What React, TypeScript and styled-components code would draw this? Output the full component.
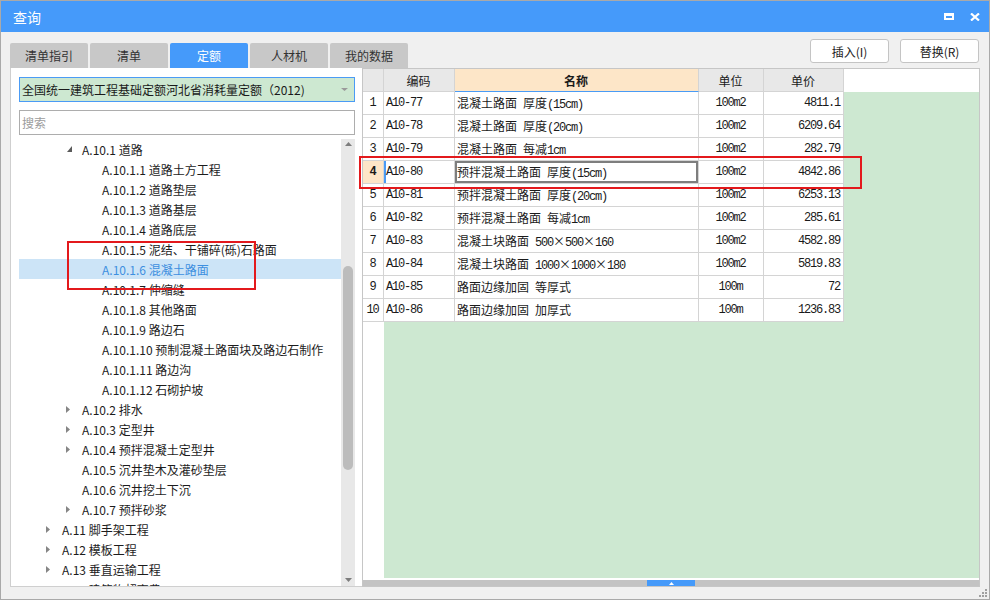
import React, { FC } from 'react';
import styled, { createGlobalStyle } from 'styled-components';

const GlobalStyle = createGlobalStyle`
  html, body {
    margin: 0;
    padding: 0;
    background: #ffffff;
  }
  body {
    font-family: "Noto Sans CJK SC", "Noto Sans", sans-serif;
    font-size: 12px;
    color: #222;
  }
  * {
    box-sizing: border-box;
  }
`;

const BLUE = '#459afa';
const GREEN = '#cde8d1';
const PEACH = '#fde6c8';
const GRID = '#d4d4d4';

const WindowStyle = styled.div`
  position: relative;
  width: 990px;
  height: 600px;
  border: 1px solid #a9a9a9;
  background: #f0f0f0;
  display: flex;
  flex-direction: column;
  overflow: hidden;
`;

const TitleBarStyle = styled.div`
  flex: none;
  height: 31px;
  background: ${BLUE};
  display: flex;
  align-items: center;
  justify-content: space-between;
  padding: 0 9px 0 12px;
  color: #fff;
  font-size: 14px;
`;

const WinButtonsStyle = styled.div`
  display: flex;
  align-items: center;
  gap: 16px;
  & > svg {
    display: block;
  }
`;

const BodyStyle = styled.div`
  flex: 1;
  min-height: 0;
  display: flex;
  flex-direction: column;
  padding: 0 9px 12px 9px;
`;

const TopRowStyle = styled.div`
  flex: none;
  height: 36px;
  display: flex;
  justify-content: space-between;
`;

const TabsStyle = styled.div`
  display: flex;
  gap: 2px;
  align-self: flex-end;
`;

const TabStyle = styled.div<{ $active?: boolean }>`
  width: 78px;
  height: 25px;
  display: flex;
  align-items: center;
  justify-content: center;
  border-radius: 2px 2px 0 0;
  background: ${p => (p.$active ? BLUE : '#c8c8c8')};
  color: ${p => (p.$active ? '#fff' : '#333')};
  font-size: 12px;
`;

const ActionsStyle = styled.div`
  display: flex;
  gap: 11px;
  margin-top: 7px;
  margin-right: 1px;
  align-self: flex-start;
`;

const ActionButtonStyle = styled.div`
  width: 79px;
  height: 24px;
  display: flex;
  align-items: center;
  justify-content: center;
  background: #fff;
  border: 1px solid #c4c4c4;
  border-radius: 3px;
  color: #222;
  font-size: 12px;
`;

const ContentStyle = styled.div`
  flex: 1;
  min-height: 0;
  display: flex;
`;

const LeftPanelStyle = styled.div`
  flex: none;
  width: 352px;
  background: #fff;
  border: 1px solid #cfcfcf;
  border-top: none;
  border-right: none;
  padding: 9px 7px 0 8px;
  display: flex;
  flex-direction: column;
`;

const SelectStyle = styled.div`
  flex: none;
  height: 25px;
  border: 1px solid #4a9bf5;
  background: ${GREEN};
  display: flex;
  align-items: center;
  justify-content: space-between;
  padding: 0 6px 0 2px;
  font-size: 12px;
  color: #1a1a1a;
  white-space: nowrap;
`;

const SearchStyle = styled.input`
  flex: none;
  height: 25px;
  margin-top: 8px;
  border: 1px solid #adadad;
  padding: 0 2px;
  outline: none;
  font-family: "Noto Sans CJK SC", sans-serif;
  font-size: 12px;
  &::placeholder {
    color: #9c9c9c;
  }
`;

const TreeAreaStyle = styled.div`
  flex: 1;
  min-height: 0;
  margin-top: 4px;
  display: flex;
`;

const TreeListStyle = styled.div`
  flex: 1;
  overflow: hidden;
`;

const TreeRowStyle = styled.div<{ $level: number; $selected?: boolean }>`
  height: 20px;
  display: flex;
  align-items: center;
  padding-left: ${p => 3 + p.$level * 20}px;
  white-space: nowrap;
  font-size: 12px;
  background: ${p => (p.$selected ? '#cce4f7' : 'transparent')};
  color: ${p => (p.$selected ? '#3d8fe0' : '#1c1c1c')};
`;

const ExpanderStyle = styled.span<{ $open?: boolean }>`
  flex: none;
  width: 20px;
  height: 20px;
  display: flex;
  align-items: center;
  padding-left: ${p => (p.$open ? 5 : 4)}px;
`;

const VScrollStyle = styled.div`
  flex: none;
  width: 14px;
  background: #e8e8e8;
  display: flex;
  flex-direction: column;
  align-items: center;
`;

const ScrollArrowStyle = styled.div<{ $h: number }>`
  flex: none;
  height: ${p => p.$h}px;
  display: flex;
  align-items: center;
  justify-content: center;
`;

const VThumbStyle = styled.div`
  flex: none;
  width: 10px;
  height: 204px;
  margin-top: 118px;
  border-radius: 5px;
  background: #bcbcbc;
`;

const SpacerStyle = styled.div`
  flex: 1;
`;

const RightPanelStyle = styled.div`
  flex: 1;
  min-width: 0;
  background: #fff;
  border: 1px solid #c6c6c6;
  display: flex;
  flex-direction: column;
`;

const GridStyle = styled.div`
  flex: none;
  display: grid;
  grid-template-columns: 21px 71px 244px 65px 80px 1fr;
  grid-auto-rows: 23px;
`;

type Mark = 'edit' | 'cursor' | undefined;

const CellStyle = styled.div<{
  $align?: 'left' | 'center' | 'right';
  $bg?: string;
  $bold?: boolean;
  $mono?: boolean;
  $plain?: boolean;
  $accent?: boolean;
  $mark?: Mark;
}>`
  display: flex;
  align-items: center;
  justify-content: ${p =>
    p.$align === 'right' ? 'flex-end' : p.$align === 'center' ? 'center' : 'flex-start'};
  padding: 0 3px 0 2px;
  border-right: ${p => (p.$plain ? 'none' : `1px solid ${GRID}`)};
  border-bottom: ${p => (p.$plain ? 'none' : `1px solid ${p.$accent ? '#4a9bf5' : GRID}`)};
  background: ${p => p.$bg ?? '#fff'};
  font-weight: ${p => (p.$bold ? 700 : 400)};
  font-family: ${p =>
    p.$mono ? '"Liberation Mono", "Noto Sans CJK SC", monospace' : '"Noto Sans CJK SC", sans-serif'};
  letter-spacing: ${p => (p.$mono ? '-1.2px' : '0')};
  font-size: 12px;
  color: #1a1a1a;
  white-space: nowrap;
  overflow: hidden;
  box-shadow: ${p =>
    p.$mark === 'edit'
      ? 'inset 0 0 0 2px #7e7e7e'
      : p.$mark === 'cursor'
      ? 'inset 2px 0 0 #4a9bf5'
      : 'none'};
`;

const LatinRunStyle = styled.span`
  font-family: "Liberation Mono", monospace;
  letter-spacing: -1.2px;
  white-space: pre;
`;

const FillerStyle = styled.div`
  flex: 1;
  display: flex;
`;

const FillerGutterStyle = styled.div`
  flex: none;
  width: 21px;
  background: #fff;
`;

const FillerGreenStyle = styled.div`
  flex: 1;
  background: ${GREEN};
`;

const HScrollStyle = styled.div`
  flex: none;
  height: 6px;
  margin-top: 2px;
  background: #c3c3c3;
  display: flex;
  justify-content: center;
`;

const HThumbStyle = styled.div`
  width: 48px;
  height: 6px;
  background: ${BLUE};
  display: flex;
  align-items: center;
  justify-content: center;
`;

const AnnotationStyle = styled.div<{ $x: number; $y: number; $w: number; $h: number }>`
  position: absolute;
  left: ${p => p.$x - 1}px;
  top: ${p => p.$y - 1}px;
  width: ${p => p.$w}px;
  height: ${p => p.$h}px;
  border: 2px solid #e3191c;
  pointer-events: none;
`;

const GripStyle = styled.div`
  position: absolute;
  right: 1px;
  bottom: 1px;
  & > svg {
    display: block;
  }
`;

// ---------- data ----------

const tabs = ['清单指引', '清单', '定额', '人材机', '我的数据'];

interface TreeItem {
  level: number;
  label: string;
  expand?: 'open' | 'closed';
  selected?: boolean;
}

const tree: TreeItem[] = [
  { level: 2, label: 'A.10.1 道路', expand: 'open' },
  { level: 3, label: 'A.10.1.1 道路土方工程' },
  { level: 3, label: 'A.10.1.2 道路垫层' },
  { level: 3, label: 'A.10.1.3 道路基层' },
  { level: 3, label: 'A.10.1.4 道路底层' },
  { level: 3, label: 'A.10.1.5 泥结、干铺碎(砾)石路面' },
  { level: 3, label: 'A.10.1.6 混凝土路面', selected: true },
  { level: 3, label: 'A.10.1.7 伸缩缝' },
  { level: 3, label: 'A.10.1.8 其他路面' },
  { level: 3, label: 'A.10.1.9 路边石' },
  { level: 3, label: 'A.10.1.10 预制混凝土路面块及路边石制作' },
  { level: 3, label: 'A.10.1.11 路边沟' },
  { level: 3, label: 'A.10.1.12 石砌护坡' },
  { level: 2, label: 'A.10.2 排水', expand: 'closed' },
  { level: 2, label: 'A.10.3 定型井', expand: 'closed' },
  { level: 2, label: 'A.10.4 预拌混凝土定型井', expand: 'closed' },
  { level: 2, label: 'A.10.5 沉井垫木及灌砂垫层' },
  { level: 2, label: 'A.10.6 沉井挖土下沉' },
  { level: 2, label: 'A.10.7 预拌砂浆', expand: 'closed' },
  { level: 1, label: 'A.11 脚手架工程', expand: 'closed' },
  { level: 1, label: 'A.12 模板工程', expand: 'closed' },
  { level: 1, label: 'A.13 垂直运输工程', expand: 'closed' },
  { level: 1, label: 'A.14 建筑物超高费', expand: 'closed' },
];

const rows = [
  ['A10-77', '混凝土路面 厚度(15cm)', '100m2', '4811.1'],
  ['A10-78', '混凝土路面 厚度(20cm)', '100m2', '6209.64'],
  ['A10-79', '混凝土路面 每减1cm', '100m2', '282.79'],
  ['A10-80', '预拌混凝土路面 厚度(15cm)', '100m2', '4842.86'],
  ['A10-81', '预拌混凝土路面 厚度(20cm)', '100m2', '6253.13'],
  ['A10-82', '预拌混凝土路面 每减1cm', '100m2', '285.61'],
  ['A10-83', '混凝土块路面 500×500×160', '100m2', '4582.89'],
  ['A10-84', '混凝土块路面 1000×1000×180', '100m2', '5819.83'],
  ['A10-85', '路面边缘加固 等厚式', '100m', '72'],
  ['A10-86', '路面边缘加固 加厚式', '100m', '1236.83'],
];

const activeRow = 3;

// ---------- parts ----------

// CJK runs in the sans face, ascii runs in a narrow mono face (like SimSun half-width)
const MixedText: FC<{ text: string }> = ({ text }) => (
  <span>
    {text
      .split(/([\x20-\x7e]+)/)
      .filter(Boolean)
      .map((part, i) =>
        /^[\x20-\x7e]+$/.test(part) ? (
          <LatinRunStyle key={i}>{part}</LatinRunStyle>
        ) : (
          <span key={i}>{part}</span>
        )
      )}
  </span>
);

const Expander: FC<{ state?: 'open' | 'closed' }> = ({ state }) => (
  <ExpanderStyle $open={state === 'open'}>
    {state === 'open' && (
      <svg width="5" height="6" viewBox="0 0 5 6">
        <path d="M5 0V6H0Z" fill="#5a5a5a" />
      </svg>
    )}
    {state === 'closed' && (
      <svg width="4" height="7" viewBox="0 0 4 7">
        <path d="M0 0L4 3.5L0 7Z" fill="#858585" />
      </svg>
    )}
  </ExpanderStyle>
);

const ArrowUp: FC<{ color: string; w?: number; h?: number }> = ({ color, w = 7, h = 4 }) => (
  <svg width={w} height={h} viewBox={`0 0 ${w} ${h}`}>
    <path d={`M0 ${h}L${w / 2} 0L${w} ${h}Z`} fill={color} />
  </svg>
);

const ArrowDown: FC<{ color: string; w?: number; h?: number }> = ({ color, w = 7, h = 4 }) => (
  <svg width={w} height={h} viewBox={`0 0 ${w} ${h}`}>
    <path d={`M0 0L${w / 2} ${h}L${w} 0Z`} fill={color} />
  </svg>
);

const App: FC = () => {
  return (
    <WindowStyle>
      <GlobalStyle />
      <TitleBarStyle>
        <span>查询</span>
        <WinButtonsStyle>
          <svg width="10" height="7" viewBox="0 0 10 7">
            <path d="M0 0H10V7H0Z M2 3V5H8V3Z" fill="#fff" fillRule="evenodd" />
          </svg>
          <svg width="10" height="8" viewBox="0 0 10 8">
            <path d="M1 0.5L9 7.5M9 0.5L1 7.5" stroke="#fff" strokeWidth="2.2" />
          </svg>
        </WinButtonsStyle>
      </TitleBarStyle>

      <BodyStyle>
        <TopRowStyle>
          <TabsStyle>
            {tabs.map(t => (
              <TabStyle key={t} $active={t === '定额'}>
                {t}
              </TabStyle>
            ))}
          </TabsStyle>
          <ActionsStyle>
            <ActionButtonStyle>插入(I)</ActionButtonStyle>
            <ActionButtonStyle>替换(R)</ActionButtonStyle>
          </ActionsStyle>
        </TopRowStyle>

        <ContentStyle>
          <LeftPanelStyle>
            <SelectStyle>
              <span>全国统一建筑工程基础定额河北省消耗量定额（2012)</span>
              <ArrowDown color="#9a9a9a" w={7} h={3} />
            </SelectStyle>
            <SearchStyle placeholder="搜索" />
            <TreeAreaStyle>
              <TreeListStyle>
                {tree.map(item => (
                  <TreeRowStyle key={item.label} $level={item.level} $selected={item.selected}>
                    <Expander state={item.expand} />
                    {item.label}
                  </TreeRowStyle>
                ))}
              </TreeListStyle>
              <VScrollStyle>
                <ScrollArrowStyle $h={9}>
                  <ArrowUp color="#7d7d7d" />
                </ScrollArrowStyle>
                <VThumbStyle />
                <SpacerStyle />
                <ScrollArrowStyle $h={12}>
                  <ArrowDown color="#7d7d7d" />
                </ScrollArrowStyle>
              </VScrollStyle>
            </TreeAreaStyle>
          </LeftPanelStyle>

          <RightPanelStyle>
            <GridStyle>
              <CellStyle $bg="#e8e8e8" />
              <CellStyle $bg="#e8e8e8" $align="center">编码</CellStyle>
              <CellStyle $bg={PEACH} $align="center" $bold $accent>名称</CellStyle>
              <CellStyle $bg="#e8e8e8" $align="center">单位</CellStyle>
              <CellStyle $bg="#e8e8e8" $align="center">单价</CellStyle>
              <CellStyle $plain />
              {rows.map((r, i) => {
                const active = i === activeRow;
                return (
                  <React.Fragment key={r[0]}>
                    <CellStyle $align="center" $mono $bg={active ? PEACH : '#fff'} $bold={active}>
                      {i + 1}
                    </CellStyle>
                    <CellStyle $mono $mark={active ? 'cursor' : undefined}>{r[0]}</CellStyle>
                    <CellStyle $mark={active ? 'edit' : undefined}>
                      <MixedText text={r[1]} />
                    </CellStyle>
                    <CellStyle $align="center" $mono>{r[2]}</CellStyle>
                    <CellStyle $align="right" $mono>{r[3]}</CellStyle>
                    <CellStyle $plain $bg={GREEN} />
                  </React.Fragment>
                );
              })}
            </GridStyle>
            <FillerStyle>
              <FillerGutterStyle />
              <FillerGreenStyle />
            </FillerStyle>
            <HScrollStyle>
              <HThumbStyle>
                <ArrowUp color="#fff" w={5} h={3} />
              </HThumbStyle>
            </HScrollStyle>
          </RightPanelStyle>
        </ContentStyle>
      </BodyStyle>

      <AnnotationStyle $x={67} $y={241} $w={189} $h={49} />
      <AnnotationStyle $x={359} $y={156} $w={503} $h={33} />

      <GripStyle>
        <svg width="9" height="9" viewBox="0 0 9 9">
          <g fill="#a0a0a0">
            <rect x="6" y="0" width="2" height="2" />
            <rect x="3" y="3" width="2" height="2" />
            <rect x="6" y="3" width="2" height="2" />
            <rect x="0" y="6" width="2" height="2" />
            <rect x="3" y="6" width="2" height="2" />
            <rect x="6" y="6" width="2" height="2" />
          </g>
        </svg>
      </GripStyle>
    </WindowStyle>
  );
};

export default App;
